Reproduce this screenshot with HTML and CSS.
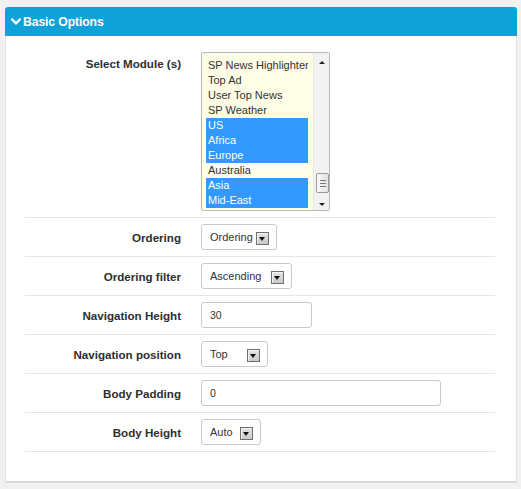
FILE: index.html
```html
<!DOCTYPE html>
<html>
<head>
<meta charset="utf-8">
<title>Basic Options</title>
<link rel="stylesheet" href="styles.css">
</head>
<body>
<div class="page">
  <div class="panel">
    <div class="panel-head">
      <svg class="chev" width="10" height="8" viewBox="0 0 10 8"><path d="M1.2 1.5 L5 5.3 L8.8 1.5" fill="none" stroke="#fff" stroke-width="2.3" stroke-linecap="square"/></svg>
      <span class="head-title">Basic Options</span>
    </div>
    <div class="panel-body">
      <div class="row row-list">
        <div class="lbl lbl-top">Select Module (s)</div>
        <div class="listbox">
          <div class="items">
            <div class="opt">SP News Highlighter</div>
            <div class="opt">Top Ad</div>
            <div class="opt">User Top News</div>
            <div class="opt">SP Weather</div>
            <div class="opt sel">US</div>
            <div class="opt sel">Africa</div>
            <div class="opt sel">Europe</div>
            <div class="opt">Australia</div>
            <div class="opt sel">Asia</div>
            <div class="opt sel">Mid-East</div>
          </div>
          <div class="sbar">
            <span class="sarrow up"></span>
            <span class="thumb"><i></i><i></i><i></i></span>
            <span class="sarrow down"></span>
          </div>
        </div>
      </div>
      <div class="row">
        <div class="lbl">Ordering</div>
        <div class="select w-ordering"><span class="val">Ordering</span><span class="btn"></span></div>
      </div>
      <div class="row">
        <div class="lbl">Ordering filter</div>
        <div class="select w-filter"><span class="val">Ascending</span><span class="btn"></span></div>
      </div>
      <div class="row">
        <div class="lbl">Navigation Height</div>
        <div class="text w-navh">30</div>
      </div>
      <div class="row">
        <div class="lbl">Navigation position</div>
        <div class="select w-navpos"><span class="val">Top</span><span class="btn"></span></div>
      </div>
      <div class="row">
        <div class="lbl">Body Padding</div>
        <div class="text w-pad">0</div>
      </div>
      <div class="row">
        <div class="lbl">Body Height</div>
        <div class="select w-bodyh"><span class="val">Auto</span><span class="btn"></span></div>
      </div>
    </div>
  </div>
</div>
</body>
</html>
```
FILE: styles.css
```css
html, body {
  margin: 0;
  padding: 0;
  background: #f1f1f1;
  font-family: "Liberation Sans", Arial, sans-serif;
  color: #333;
}
.page {
  padding: 7px 4px 0 5px;
}
.panel {
  width: 512px;
}
.panel-head {
  height: 29px;
  background: #0ea2d8;
  border-radius: 3px 3px 0 0;
  display: flex;
  align-items: center;
  padding-left: 6px;
  color: #fff;
}
.chev {
  display: block;
  margin-right: 2px;
  margin-top: 1px;
}
.head-title {
  font-size: 12.2px;
  font-weight: bold;
  letter-spacing: -0.1px;
}
.panel-body {
  background: #fff;
  border-left: 1px solid #e4e4e4;
  border-right: 1px solid #e4e4e4;
  border-bottom: 2px solid #d9d9d9;
  padding: 0 21px 29px 19px;
}
.row {
  display: flex;
  align-items: center;
  height: 38px;
  border-bottom: 1px solid #e6e6e6;
}
.row-list {
  height: 165px;
  align-items: flex-start;
  padding-top: 16px;
}
.lbl {
  width: 156px;
  flex: none;
  text-align: right;
  font-size: 11.6px;
  font-weight: bold;
  color: #2e2e2e;
  margin-right: 20px;
}
.lbl-top {
  margin-top: 5px;
}
.listbox {
  width: 127px;
  height: 157px;
  border: 1px solid #b9b9b9;
  border-radius: 2px;
  background: #fefde6;
  display: flex;
}
.items {
  width: 102px;
  padding: 5px 4px 0 4px;
}
.opt {
  height: 15px;
  line-height: 15px;
  font-size: 11px;
  padding-left: 2px;
  color: #333;
  white-space: nowrap;
  overflow: hidden;
}
.opt.sel {
  background: #3399ff;
  color: #fff;
}
.sbar {
  width: 16px;
  margin-left: 1px;
  background: #f2f2f2;
  border-left: 1px solid #e6e6e6;
  display: flex;
  flex-direction: column;
  align-items: center;
  position: relative;
}
.sarrow {
  width: 0;
  height: 0;
  border-left: 3px solid transparent;
  border-right: 3px solid transparent;
}
.sarrow.up {
  border-bottom: 3px solid #222;
  margin-top: 8px;
}
.sarrow.down {
  border-top: 3px solid #222;
  margin-top: auto;
  margin-bottom: 4px;
}
.thumb {
  position: absolute;
  left: 2px;
  top: 120px;
  width: 11px;
  height: 18px;
  border: 1px solid #9a9a9a;
  border-radius: 2px;
  background: linear-gradient(to right, #fafafa, #e2e2e2);
  display: flex;
  flex-direction: column;
  justify-content: center;
  align-items: center;
  gap: 2px;
}
.thumb i {
  display: block;
  width: 6px;
  height: 1px;
  background: #777;
}
.select {
  box-sizing: border-box;
  height: 26px;
  border: 1px solid #c9c9c9;
  border-radius: 3px;
  background: #fff;
  display: flex;
  align-items: center;
  padding-left: 8px;
  padding-right: 7px;
}
.val {
  font-size: 11px;
  color: #333;
}
.btn {
  box-sizing: border-box;
  width: 13px;
  height: 13px;
  margin-left: auto;
  margin-top: 3px;
  border: 1px solid #6f6f6f;
  background: linear-gradient(#e4e4e4, #c9c9c9);
  box-shadow: inset 1px 1px 0 #f4f4f4;
  position: relative;
}
.btn::after {
  content: "";
  position: absolute;
  left: 2px;
  top: 4px;
  width: 0;
  height: 0;
  border-left: 3.5px solid transparent;
  border-right: 3.5px solid transparent;
  border-top: 4px solid #111;
}
.w-ordering { width: 76px; }
.w-filter { width: 91px; }
.w-navpos { width: 67px; }
.w-bodyh { width: 60px; }
.text {
  box-sizing: border-box;
  height: 26px;
  border: 1px solid #c9c9c9;
  border-radius: 3px;
  background: #fff;
  display: flex;
  align-items: center;
  padding-left: 8px;
  font-size: 10.5px;
  color: #333;
}
.w-navh { width: 111px; }
.w-pad { width: 240px; }
```
